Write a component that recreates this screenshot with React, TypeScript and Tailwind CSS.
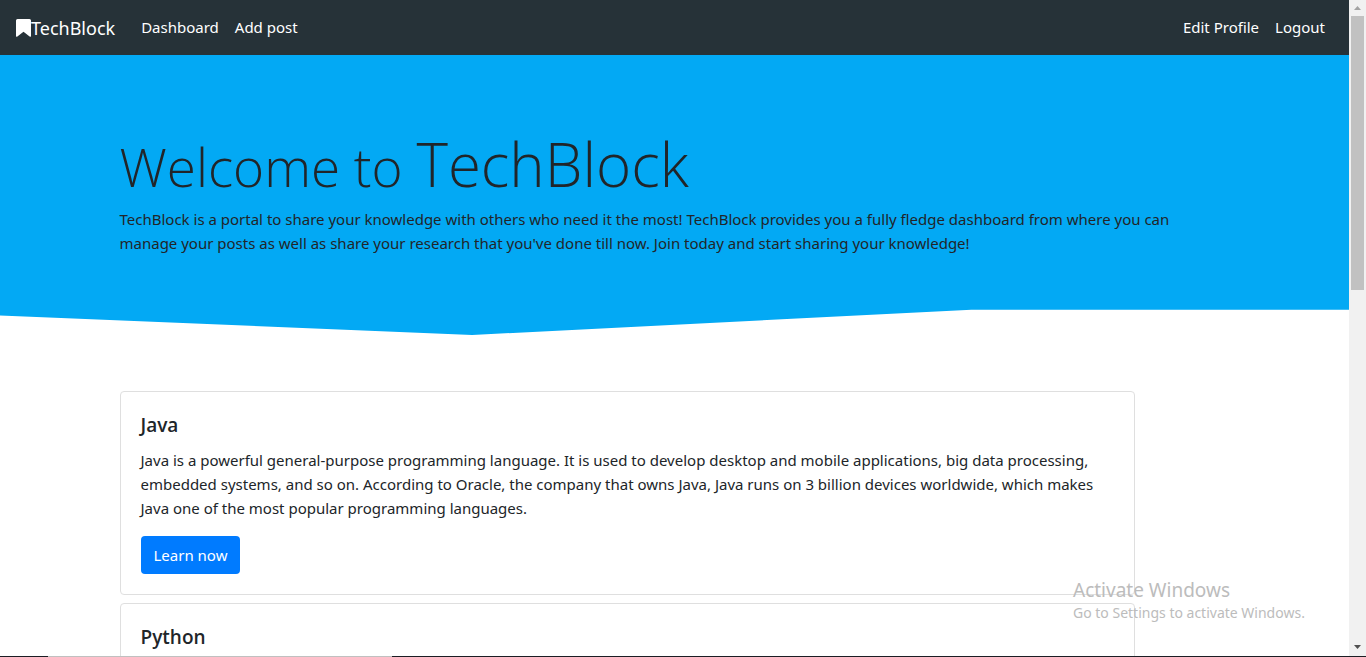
const posts: PostProps[] = [
  {
    title: "Java",
    text: "Java is a powerful general-purpose programming language. It is used to develop desktop and mobile applications, big data processing, embedded systems, and so on. According to Oracle, the company that owns Java, Java runs on 3 billion devices worldwide, which makes Java one of the most popular programming languages.",
  },
  { title: "Python" },
];

type PostProps = { title: string; text?: string };

function Navbar() {
  return (
    <nav className="flex h-[55px] items-center bg-[#263238] px-4 text-[15px] text-white">
      <a href="#home" className="mr-[26px] flex items-center text-[18px] leading-[30px]">
        <svg viewBox="0 0 15 18" className="h-[18px] w-[15px]" fill="currentColor" aria-hidden="true">
          <path d="M1.5 0h12A1.5 1.5 0 0 1 15 1.5V16.8a.9.9 0 0 1-1.4.8L7.5 12.8 1.4 17.6A.9.9 0 0 1 0 16.8V1.500A1.500 1.500 0 0 1 1.500 0Z" />
        </svg>
        TechBlock
      </a>
      <div className="flex flex-1 gap-4">
        <a href="#dashboard">Dashboard</a>
        <a href="#add">Add post</a>
      </div>
      <div className="flex gap-4 pr-2">
        <a href="#profile">Edit Profile</a>
        <a href="#logout">Logout</a>
      </div>
    </nav>
  );
}

function Hero() {
  return (
    <header className="h-[280px] bg-[#03a9f4] pt-[73px] [clip-path:polygon(0_0,100%_0,100%_91%,72%_91%,35%_100%,0_93%)]">
      <div className="mx-auto max-w-[1140px] px-[15px]">
        <h1 className="mb-1 font-['Open_Sans',sans-serif] text-[53px] leading-[72px] font-light whitespace-nowrap">
          Welcome to <span className="text-[60px]">TechBlock</span>
        </h1>
        <p className="max-w-[1080px] text-[15px] leading-6">
          TechBlock is a portal to share your knowledge with others who need it the most! TechBlock provides you a
          fully fledge dashboard from where you can manage your posts as well as share your research that you've done
          till now. Join today and start sharing your knowledge!
        </p>
      </div>
    </header>
  );
}

function Post({ title, text }: PostProps) {
  return (
    <article className="max-w-[1015px] rounded border border-[#dfdfdf] bg-white p-5">
      <h5 className="mb-2.5 font-['Open_Sans',sans-serif] text-[19px] leading-[26px] font-semibold">{title}</h5>
      {text && (
        <>
          <p className="mb-4 text-[15px] leading-6">{text}</p>
          <button type="button" className="h-[38px] rounded bg-[#007bff] px-[13px] text-[15px] text-white">
            Learn now
          </button>
        </>
      )}
    </article>
  );
}

function Scrollbar() {
  return (
    <div className="flex w-[17px] shrink-0 flex-col items-center bg-[#f1f1f1]" aria-hidden="true">
      <svg viewBox="0 0 17 16" className="h-4 w-[17px]" fill="#a3a3a3">
        <path d="M5 10 8.500 6 12 10Z" />
      </svg>
      <div className="h-[274px] w-[13px] bg-[#c1c1c1]" />
      <svg viewBox="0 0 17 17" className="mt-auto h-[17px] w-[17px]" fill="#505050">
        <path d="M5 6h7L8.500 10Z" />
      </svg>
    </div>
  );
}

export default function App() {
  return (
    <div className="relative flex h-screen flex-col overflow-hidden bg-white font-['Noto_Sans',sans-serif] text-[#212529]">
      <div className="flex min-h-0 flex-1">
        <div className="min-w-0 flex-1 overflow-hidden">
          <Navbar />
          <Hero />
          <main className="mx-auto flex max-w-[1140px] flex-col gap-2 px-[15px] pt-14">
            {posts.map((post) => (
              <Post key={post.title} {...post} />
            ))}
          </main>
        </div>
        <Scrollbar />
      </div>
      <div className="flex h-px shrink-0 bg-[#1b1d24]">
        <div className="ml-12 w-[344px] bg-[#c0c0c0]" />
      </div>
      <div className="pointer-events-none absolute right-[57px] bottom-[34px] w-[236px] whitespace-nowrap text-[#bcbcbc]">
        <div className="text-[19px] leading-[26px]">Activate Windows</div>
        <div className="text-[14px] leading-5">Go to Settings to activate Windows.</div>
      </div>
    </div>
  );
}
